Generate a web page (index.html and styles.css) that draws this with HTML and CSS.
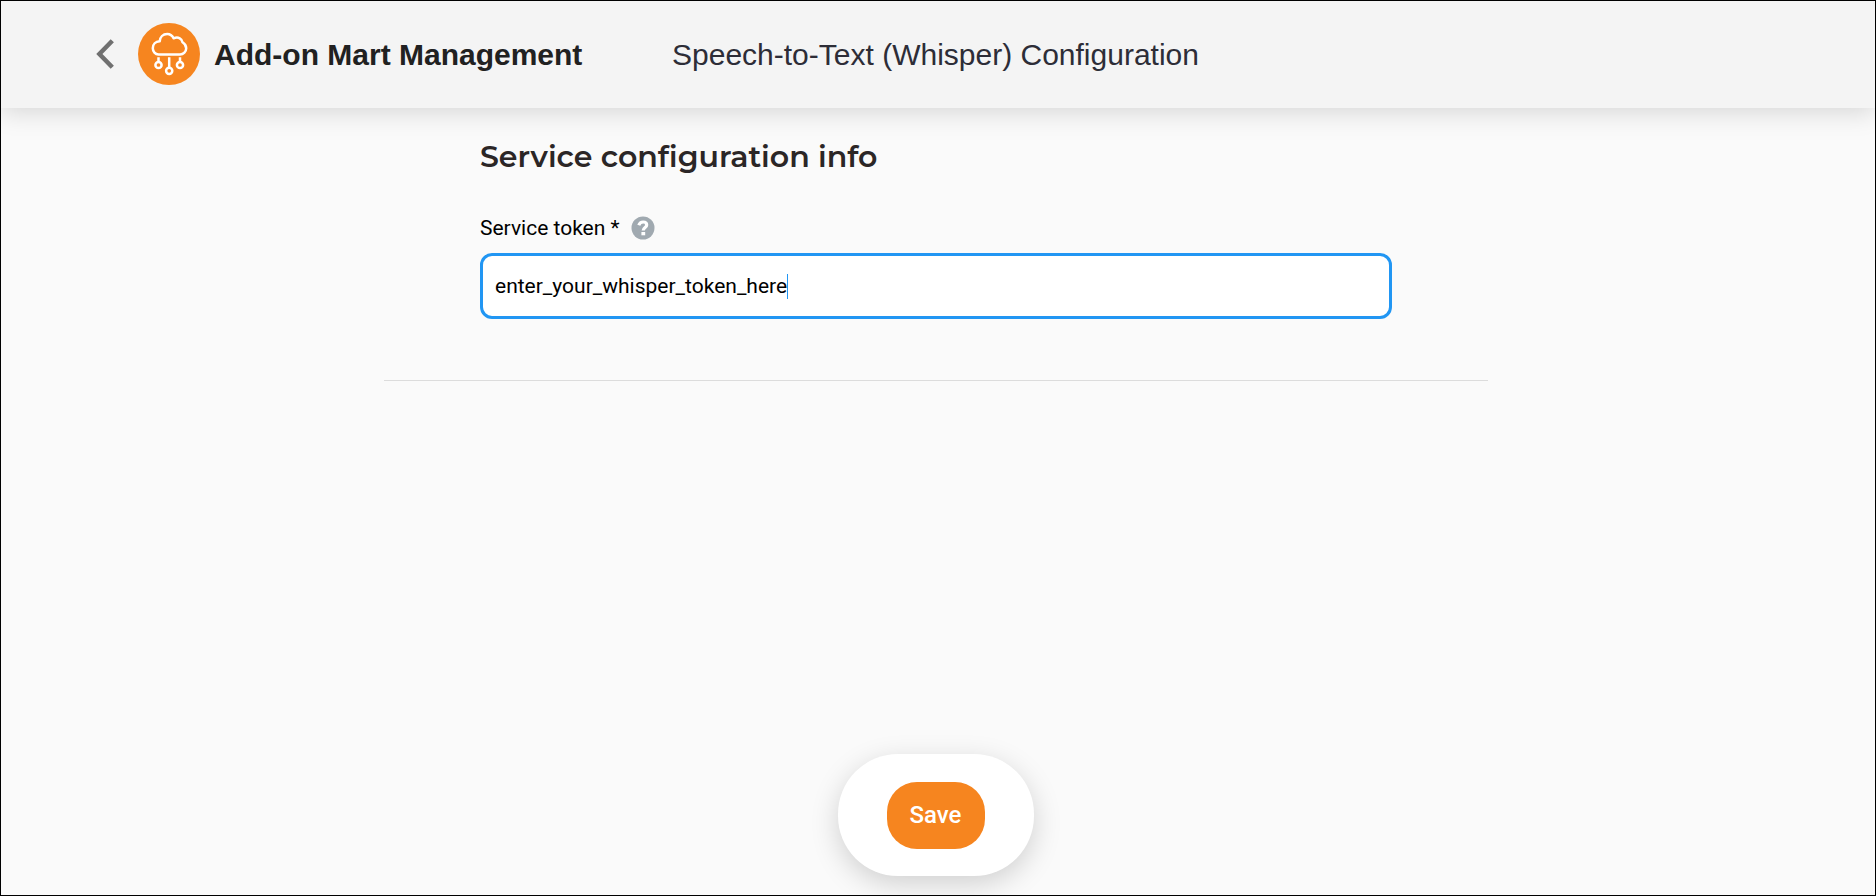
FILE: index.html
```html
<!DOCTYPE html>
<html lang="en">
<head>
<meta charset="utf-8">
<meta name="viewport" content="width=device-width, initial-scale=1">
<title>Speech-to-Text (Whisper) Configuration</title>
<link rel="stylesheet" href="styles.css">
</head>
<body>
<div class="page">
  <header class="header">
    <div class="brand">
      <a class="back" href="#" aria-label="Back">
        <svg width="18" height="30" viewBox="0 0 18 30" fill="none" stroke="#707070" stroke-width="4.500"><path d="M16.300 1.800 3.400 15 16.300 28.200"/></svg>
      </a>
      <svg class="logo" width="62" height="62" viewBox="0 0 62 62" fill="none" stroke="#fff" stroke-width="2.500" aria-hidden="true">
        <circle cx="31" cy="31" r="31" fill="#f6851f" stroke="none"/>
        <path d="M20.500 31.500H42A6.200 6.200 0 0 0 48.200 25.300C48.200 22.700 47 20.800 44.500 19.300C44.200 16 40.500 13.300 35.700 15.300C34.200 12.500 32 11 29.200 11C25 11 22 14 21.700 18.300C17.500 18.500 14.800 21.500 14.800 25.300A6 6.200 0 0 0 20.500 31.500Z" stroke-linejoin="round"/>
        <path d="M20.500 34.300V39M31.200 34.300V44.500M42 34.300V39"/>
        <circle cx="20.500" cy="42" r="3.100"/>
        <circle cx="31.200" cy="47.800" r="3.100"/>
        <circle cx="42" cy="42" r="3.100"/>
      </svg>
      <span class="brand-name">Add-on Mart Management</span>
    </div>
    <h1 class="title">Speech-to-Text (Whisper) Configuration</h1>
  </header>
  <form class="content">
    <section class="config">
      <h2 class="section-title">Service configuration info</h2>
      <div class="label-row">
        <label for="token">Service token *</label>
        <button class="help" type="button" aria-label="Help">
          <svg width="24" height="24" viewBox="0 0 24 24" fill="none"><circle cx="12" cy="12" r="11.500" fill="#a0a9b0"/><path d="M7.800 9.200C8.500 7.200 10 6 12.200 6C14.400 6 15.700 7.200 15.700 9C15.700 11.600 12.200 11.400 12.200 14.600" stroke="#fff" stroke-width="3.200"/><path d="M10.400 16H14.200V19.300H10.400Z" fill="#fff"/></svg>
        </button>
      </div>
      <div class="field">
        <input class="token" id="token" type="text" value="enter_your_whisper_token_here">
        <span class="caret"></span>
      </div>
    </section>
    <div class="actions">
      <button class="save" type="submit">Save</button>
    </div>
  </form>
</div>
</body>
</html>
```
FILE: styles.css
```css
* { box-sizing: border-box; }

body {
  margin: 0;
  background: #fafafa;
  font-family: Roboto, "Liberation Sans", sans-serif;
  color: #000;
}

.page {
  display: flex;
  flex-direction: column;
  min-height: 100vh;
  border: 1px solid #000;
}

.header {
  display: grid;
  grid-template-columns: 1fr auto 1fr;
  align-items: center;
  padding: 22px 100px 23px 95px;
  background: #f4f4f4;
  box-shadow: 0 4px 24px rgba(0, 0, 0, 0.15);
  clip-path: inset(0 0 -40px 0);
  font-family: "Liberation Sans", Arial, sans-serif;
  font-size: 30px;
}

.brand { display: flex; align-items: center; }
.back { display: flex; margin-right: 24px; }
.logo { margin-right: 14px; }

.brand-name {
  padding-top: 2px;
  font-weight: 700;
  color: #212121;
  white-space: nowrap;
}

.title {
  margin: 0;
  padding-top: 2px;
  font-size: 30px;
  font-weight: 400;
  color: #2d2d37;
}

.content {
  display: flex;
  flex: 1;
  flex-direction: column;
  align-items: center;
  justify-content: space-between;
  padding: 29px 4px 19px 0;
}

.config {
  width: 100%;
  max-width: 1104px;
  padding: 0 96px 61px;
  border-bottom: 1px solid #dcdcdc;
}

.section-title {
  margin: 0 0 37px;
  font-family: Montserrat, Inter, sans-serif;
  font-size: 30px;
  font-weight: 600;
  line-height: 40px;
  color: #2b2626;
}

.label-row {
  display: flex;
  align-items: center;
  gap: 11px;
  margin-bottom: 11px;
  font-size: 21px;
  line-height: 28px;
}

.help {
  display: flex;
  padding: 0;
  border: 0;
  background: none;
}

.field {
  display: flex;
  align-items: center;
  height: 66px;
  padding: 0 12px;
  border: 3px solid #2196f3;
  border-radius: 12px;
  background: #fff;
}

.token {
  field-sizing: content;
  max-width: 100%;
  padding: 0;
  border: 0;
  outline: 0;
  background: none;
  color: #000;
  font: 21px Roboto, sans-serif;
}

.caret {
  width: 1px;
  height: 25px;
  background: #2196f3;
}

.actions {
  padding: 28px 49px 27px;
  border-radius: 60px;
  background: #fff;
  box-shadow: 0 8px 28px rgba(0, 0, 0, 0.17);
}

.save {
  padding: 17px 24px 18px 23px;
  border: 0;
  border-radius: 30px;
  background: #f6851f;
  color: #fff;
  font: 500 24px/32px Roboto, sans-serif;
}
```
